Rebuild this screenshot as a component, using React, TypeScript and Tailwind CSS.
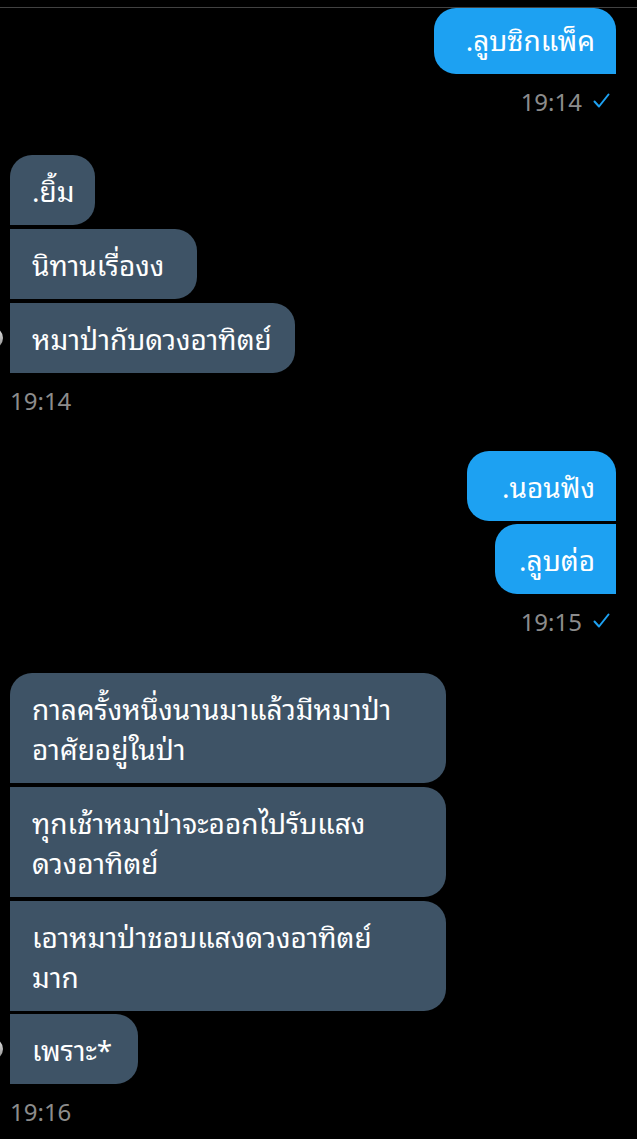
import React from "react";

const THAI = { fontFamily: '"Noto Sans Thai Looped", "Loma", "Noto Sans Thai", "Garuda", "Noto Sans", sans-serif' } as React.CSSProperties;

function Check() {
  return (
    <svg width="17" height="15" viewBox="0 0 17 15" className="ml-[11px] mr-[6px]">
      <polyline points="1.5,8.5 6,13.5 15.5,1.5" fill="none" stroke="#1da1f2" strokeWidth="2" strokeLinecap="round" strokeLinejoin="round" />
    </svg>
  );
}

function Avatar() {
  return <div className="absolute left-[-29px] top-1/2 -translate-y-1/2 w-[22px] h-[22px] rounded-full bg-gradient-to-b from-[#e8e8e8] to-[#8a8a8a]" />;
}

export default function App() {
  const left = "bg-[#3e5366] text-white text-[28px] leading-[40px] px-[22px] py-[15px] whitespace-nowrap";
  const right = "bg-[#1da1f2] text-white text-[28px] leading-[40px] px-[21px] py-[15px] whitespace-nowrap text-right";
  const time = "h-[24px] text-[24px] leading-[24px] text-[#8c8c8c]";
  return (
    <div className="w-[637px] h-[1139px] bg-black overflow-hidden" style={THAI}>
      <div className="h-[7px]" />
      <div className="h-px bg-[#424242]" />

      {/* group 1 right */}
      <div className="flex flex-col items-end pr-[21px]">
        <div className={`${right} w-[182px] pt-[11px] rounded-tl-[22px] rounded-tr-[22px] rounded-bl-[22px]`}>.ลูบซิกแพ็ค</div>
        <div className={`flex items-center mt-[14px] ${time}`}>
          19:14
          <Check />
        </div>
      </div>

      {/* group 2 left */}
      <div className="flex flex-col items-start pl-[10px] mt-[43px]">
        <div className={`${left} w-[85px] rounded-tl-[22px] rounded-r-[22px]`}>.ยิ้ม</div>
        <div className={`${left} w-[187px] mt-1 rounded-r-[22px]`}>นิทานเรื่องง</div>
        <div className={`${left} w-[285px] mt-1 rounded-r-[22px] relative`}>
          หมาป่ากับดวงอาทิตย์
          <Avatar />
        </div>
        <div className={`mt-[14px] ${time}`}>19:14</div>
      </div>

      {/* group 3 right */}
      <div className="flex flex-col items-end pr-[21px] mt-[40px]">
        <div className={`${right} w-[149px] rounded-tl-[22px] rounded-tr-[22px] rounded-bl-[22px]`}>.นอนฟัง</div>
        <div className={`${right} w-[121px] mt-[3px] rounded-l-[22px]`}>.ลูบต่อ</div>
        <div className={`flex items-center mt-[14px] ${time}`}>
          19:15
          <Check />
        </div>
      </div>

      {/* group 4 left */}
      <div className="flex flex-col items-start pl-[10px] mt-[41px]">
        <div className={`${left} w-[436px] rounded-tl-[22px] rounded-r-[22px]`}>
          กาลครั้งหนึ่งนานมาแล้วมีหมาป่า
          <br />
          อาศัยอยู่ในป่า
        </div>
        <div className={`${left} w-[436px] mt-1 rounded-r-[22px]`}>
          ทุกเช้าหมาป่าจะออกไปรับแสง
          <br />
          ดวงอาทิตย์
        </div>
        <div className={`${left} w-[436px] mt-1 rounded-r-[22px]`}>
          เอาหมาป่าชอบแสงดวงอาทิตย์
          <br />
          มาก
        </div>
        <div className={`${left} w-[128px] mt-[3px] rounded-r-[22px] relative`}>
          เพราะ*
          <Avatar />
        </div>
        <div className={`mt-[14px] ${time}`}>19:16</div>
      </div>
    </div>
  );
}
